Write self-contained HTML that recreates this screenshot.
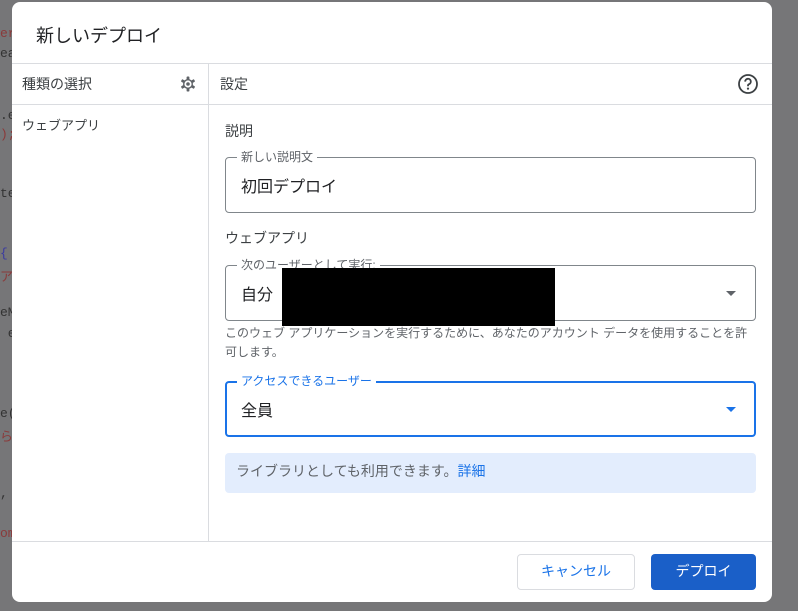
<!DOCTYPE html>
<html><head><meta charset="utf-8"><style>
*{box-sizing:border-box;margin:0;padding:0}
body{width:798px;height:611px;background:#767678;position:relative;overflow:hidden;font-family:"Liberation Sans","Noto Sans CJK JP",sans-serif;color:#3c4043}
.bg{position:absolute;left:0;font-family:"Liberation Mono",monospace;font-size:13px}
.dlg{position:absolute;left:12px;top:2px;width:760px;height:600px;background:#fff;border-radius:8px;overflow:hidden}
.abs{position:absolute}
.hl{position:absolute;height:1px;background:#dadce0}
.box{position:absolute;border:1px solid #80868b;border-radius:4px}
.lbl{position:absolute;background:#fff;padding:0 4px;font-size:12px;color:#5f6368;line-height:14px}
.arrow{position:absolute;width:0;height:0;border-left:5px solid transparent;border-right:5px solid transparent;border-top:5px solid #5f6368}
</style></head><body>
<div class="bg" style="top:26px;color:#8a3a3a">er</div>
<div class="bg" style="top:46px;color:#333">ea</div>
<div class="bg" style="top:108px;color:#333">.e</div>
<div class="bg" style="top:127px;color:#8a3a3a">);</div>
<div class="bg" style="top:186px;color:#333">te</div>
<div class="bg" style="top:246px;color:#3a3aa0">{</div>
<div class="bg" style="top:266px;color:#8a3a3a">ア</div>
<div class="bg" style="top:305px;color:#333">eM</div>
<div class="bg" style="top:326px;color:#333">&nbsp;e</div>
<div class="bg" style="top:406px;color:#333">e(</div>
<div class="bg" style="top:426px;color:#8a3a3a">らi</div>
<div class="bg" style="top:486px;color:#333">,</div>
<div class="bg" style="top:526px;color:#8a3a3a">om</div>
<div class="dlg">
 <div class="abs" style="left:24px;top:20px;font-size:18px;color:#202124">新しいデプロイ</div>
 <div class="hl" style="left:0;top:61px;width:760px"></div>
 <div class="hl" style="left:0;top:102px;width:760px"></div>
 <div class="abs" style="left:196px;top:61px;width:1px;height:478px;background:#dadce0"></div>
 <div class="abs" style="left:10px;top:72px;font-size:14px;color:#3c4043">種類の選択</div>
 <svg class="abs" style="left:167px;top:73px" width="18" height="18" viewBox="0 0 18 18">
  <g fill="#5f6368"><rect x="7.6" y="1.5" width="2.8" height="15" rx="0.8"/><rect x="7.6" y="1.5" width="2.8" height="15" rx="0.8" transform="rotate(60 9 9)"/><rect x="7.6" y="1.5" width="2.8" height="15" rx="0.8" transform="rotate(120 9 9)"/></g>
  <circle cx="9" cy="9" r="5" fill="#5f6368"/><circle cx="9" cy="9" r="3.6" fill="#fff"/><circle cx="9" cy="9" r="1.8" fill="#5f6368"/>
 </svg>
 <div class="abs" style="left:208px;top:72px;font-size:14px">設定</div>
 <svg class="abs" style="left:725px;top:71px" width="22" height="22" viewBox="0 0 22 22"><circle cx="11" cy="11" r="9" fill="none" stroke="#3c4043" stroke-width="1.8"/><path d="M8.2 8.6a2.8 2.8 0 1 1 3.8 2.6c-.7.3-1 .8-1 1.5v.6" fill="none" stroke="#3c4043" stroke-width="1.8"/><circle cx="11" cy="15.6" r="1.1" fill="#3c4043"/></svg>
 <div class="abs" style="left:10px;top:113px;font-size:13px">ウェブアプリ</div>
 <div class="abs" style="left:213px;top:119px;font-size:14px">説明</div>
 <div class="box" style="left:213px;top:155px;width:531px;height:56px"></div>
 <div class="lbl" style="left:225px;top:148px">新しい説明文</div>
 <div class="abs" style="left:229px;top:171px;font-size:16px;color:#202124">初回デプロイ</div>
 <div class="abs" style="left:213px;top:226px;font-size:14px">ウェブアプリ</div>
 <div class="box" style="left:213px;top:263px;width:531px;height:56px"></div>
 <div class="lbl" style="left:225px;top:256px">次のユーザーとして実行:</div>
 <div class="abs" style="left:229px;top:279px;font-size:16px;color:#202124">自分</div>
 <div class="arrow" style="left:714px;top:289px"></div>
 <div class="abs" style="left:270px;top:266px;width:273px;height:58px;background:#000"></div>
 <div class="abs" style="left:213px;top:322px;width:532px;font-size:12px;line-height:19px;color:#5f6368">このウェブ アプリケーションを実行するために、あなたのアカウント データを使用することを許可します。</div>
 <div class="box" style="left:213px;top:379px;width:531px;height:56px;border:2px solid #1a73e8"></div>
 <div class="lbl" style="left:225px;top:372px;color:#1a73e8">アクセスできるユーザー</div>
 <div class="abs" style="left:229px;top:395px;font-size:16px;color:#202124">全員</div>
 <div class="arrow" style="left:714px;top:405px;border-top-color:#1a73e8"></div>
 <div class="abs" style="left:213px;top:451px;width:531px;height:40px;background:#e3edfd;border-radius:4px;padding:8px 11px;font-size:14px;color:#5f6368">ライブラリとしても利用できます。<span style="color:#1a73e8">詳細</span></div>
 <div class="hl" style="left:0;top:539px;width:760px"></div>
 <div class="abs" style="left:505px;top:552px;width:118px;height:36px;border:1px solid #dadce0;border-radius:4px;text-align:center;line-height:32px;font-size:14px;color:#1a73e8">キャンセル</div>
 <div class="abs" style="left:639px;top:552px;width:105px;height:36px;background:#1a5fc8;border-radius:4px;text-align:center;line-height:34px;font-size:14px;color:#fff">デプロイ</div>
</div>
</body></html>
